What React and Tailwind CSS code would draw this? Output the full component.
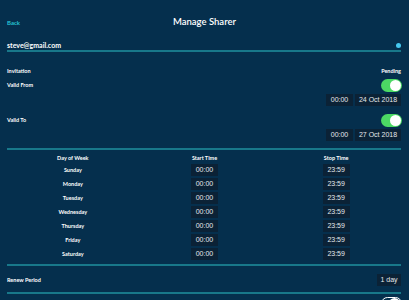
import React from 'react';

const days = ['Sunday', 'Monday', 'Tuesday', 'Wednesday', 'Thursday', 'Friday', 'Saturday'];

const Toggle = ({ on = true }) => (
    <div
        className={on
            ? "w-[21px] h-[13px] rounded-full bg-[#4cd964] flex items-center justify-end pr-[1px]"
            : "w-[21px] h-[13px] rounded-full border border-white flex items-center justify-end pr-[1px]"}
    >
        <div className="w-[11px] h-[11px] rounded-full bg-white" />
    </div>
);

const Box = ({ children, w }) => (
    <div
        className={`${w} h-[12px] bg-[#0b2236] flex items-center justify-center text-[7px] text-[#e4e8ec]`}
        style={{ fontFamily: '"Liberation Sans", Arial, sans-serif' }}
    >
        {children}
    </div>
);

const Divider = ({ className }) => (
    <div className={`h-[2px] bg-[#18788a] ${className}`} />
);

const App = () => {
    return (
        <div
            className="w-[409px] h-[300px] overflow-hidden bg-[#052f4d] text-white px-[7px]"
            style={{ fontFamily: 'Lato, "Noto Sans", sans-serif' }}
        >
            <div className="flex items-center h-[14px] mt-[15px]">
                <div className="flex-1 text-[6px] font-bold text-[#25c3d3]">Back</div>
                <div className="text-[9.5px] font-semibold">Manage Sharer</div>
                <div className="flex-1" />
            </div>

            <div className="flex items-center justify-between h-[10px] mt-[11px]">
                <span className="text-[7px] font-bold">steve@gmail.com</span>
                <div className="w-[5px] h-[5px] rounded-full bg-[#45c8ef] mr-[1px]" />
            </div>
            <Divider className="mr-[1px]" />

            <div className="flex items-center justify-between h-[8px] mt-[15px] text-[5.5px] font-bold">
                <span>Invitation</span>
                <span className="mr-[1px]">Pending</span>
            </div>

            <div className="flex items-center justify-between h-[13px] mt-[4px]">
                <span className="text-[5.5px] font-bold">Valid From</span>
                <Toggle />
            </div>
            <div className="flex justify-end gap-[2px] mt-[2px] mr-[1px]">
                <Box w="w-[27px]">00:00</Box>
                <Box w="w-[46px]">24 Oct 2018</Box>
            </div>

            <div className="flex items-center justify-between h-[13px] mt-[8px]">
                <span className="text-[5.5px] font-bold">Valid To</span>
                <Toggle />
            </div>
            <div className="flex justify-end gap-[2px] mt-[2px] mr-[1px]">
                <Box w="w-[27px]">00:00</Box>
                <Box w="w-[46px]">27 Oct 2018</Box>
            </div>

            <Divider className="mt-[7px] mr-[1px]" />

            <div className="grid grid-cols-3 h-[8px] mt-[4px] text-[5.5px] font-bold items-center">
                <span className="text-center">Day of Week</span>
                <span className="text-center">Start Time</span>
                <span className="text-center">Stop Time</span>
            </div>
            <div className="mt-[1px]">
                {days.map((d) => (
                    <div key={d} className="grid grid-cols-3 h-[14px] items-center">
                        <span className="text-center text-[5.5px] font-bold">{d}</span>
                        <div className="flex justify-center"><Box w="w-[27px]">00:00</Box></div>
                        <div className="flex justify-center"><Box w="w-[27px]">23:59</Box></div>
                    </div>
                ))}
            </div>

            <Divider className="mt-[3px] mr-[1px]" />

            <div className="flex items-center justify-between h-[12px] mt-[8px]">
                <span className="text-[5.5px] font-bold">Renew Period</span>
                <div className="mr-[1px]"><Box w="w-[24px]">1 day</Box></div>
            </div>

            <Divider className="mt-[6px] mr-[1px]" />

            <div className="flex justify-end mt-[3px]">
                <Toggle on={false} />
            </div>
        </div>
    );
};

export default App;
